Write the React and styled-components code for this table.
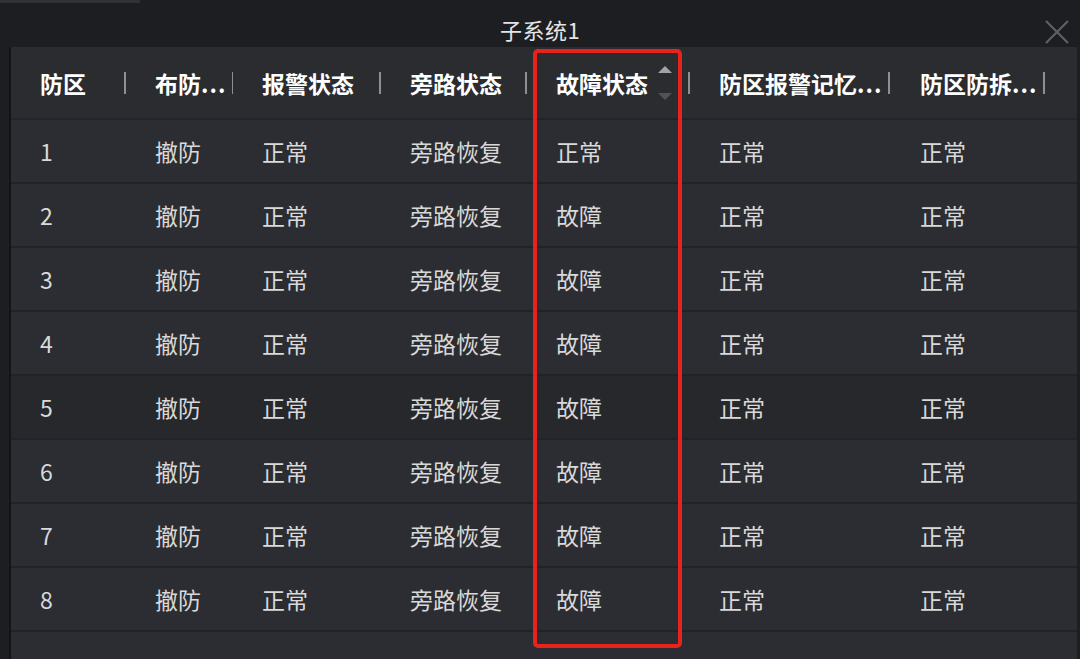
import React from 'react'
import styled, { createGlobalStyle } from 'styled-components'

const GlobalStyle = createGlobalStyle`
  html, body {
    margin: 0;
    padding: 0;
    background-color: #1d1e22;
  }
  body {
    font-family: "Noto Sans CJK SC", "Noto Sans", sans-serif;
  }
`

const COLS = '115px 107px 148px 146px 163px 201px 155px 1fr'

const Window = styled.div`
  position: relative;
  width: 1080px;
  height: 659px;
  display: flex;
  flex-direction: column;
  background-color: #1d1e22;
  overflow: hidden;
`

const TopTab = styled.div`
  width: 140px;
  height: 3px;
  background-color: #2f3136;
`

const TitleBar = styled.div`
  height: 44px;
  display: grid;
  grid-template-columns: 1fr auto 1fr;
  align-items: center;
`

const Title = styled.div`
  grid-column: 2;
  color: #e4e4e4;
  font-size: 22px;
  margin-top: 7px;
  letter-spacing: 0.5px;
`

const CloseButton = styled.div`
  justify-self: end;
  margin-right: 10px;
  margin-top: 14px;
  width: 26px;
  height: 26px;
  display: flex;
  align-items: center;
  justify-content: center;
`

const Table = styled.div`
  margin-left: 9px;
  width: 1066px;
  flex: 1;
  border-left: 2px solid #141518;
  background-color: #2b2d32;
  display: flex;
  flex-direction: column;
`

const HeaderRow = styled.div`
  display: grid;
  grid-template-columns: ${COLS};
  height: 71px;
  background-color: #2a2c30;
  border-bottom: 2px solid #232428;
`

const HeaderCell = styled.div`
  display: flex;
  align-items: center;
  padding-left: 29px;
  color: #ffffff;
  font-size: 23px;
  font-weight: 700;
  white-space: nowrap;
  overflow: hidden;
`

const Divider = styled.span`
  display: block;
  width: 2px;
  height: 22px;
  margin-left: ${p => (p.$tight ? '6px' : 'auto')};
  background-color: #8e8f92;
  flex-shrink: 0;
`

const Dots = styled.span`
  letter-spacing: 1px;
`

const SortIcon = styled.svg`
  margin-left: 9px;
  flex-shrink: 0;
`

const Row = styled.div`
  display: grid;
  grid-template-columns: ${COLS};
  height: 62px;
  background-color: ${p => (p.$dark ? '#26282c' : '#2b2d32')};
  border-bottom: 2px solid #222327;
`

const Cell = styled.div`
  display: flex;
  align-items: center;
  padding-left: 29px;
  color: #d9d9d9;
  font-size: 23px;
  white-space: nowrap;
`

const Highlight = styled.div`
  position: absolute;
  left: 533px;
  top: 49px;
  width: 141px;
  height: 591px;
  border: 4px solid #e8231d;
  border-radius: 5px;
  pointer-events: none;
`

const rows = Array.from({ length: 8 }, (_, i) => ({
  id: i + 1,
  arm: '撤防',
  alarm: '正常',
  bypass: '旁路恢复',
  fault: i === 0 ? '正常' : '故障',
  memory: '正常',
  tamper: '正常',
}))

const headers = [
  { label: '防区' },
  { label: '布防', more: true },
  { label: '报警状态' },
  { label: '旁路状态' },
  { label: '故障状态', sort: true },
  { label: '防区报警记忆', more: true },
  { label: '防区防拆', more: true },
]

export default function App() {
  return (
    <>
      <GlobalStyle />
      <Window>
        <TopTab />
        <TitleBar>
          <Title>子系统1</Title>
          <CloseButton>
            <svg width="26" height="26" viewBox="0 0 26 26">
              <path d="M2 2 L24 24 M24 2 L2 24" stroke="#5e6064" strokeWidth="2.2" />
            </svg>
          </CloseButton>
        </TitleBar>
        <Table>
          <HeaderRow>
            {headers.map(h => (
              <HeaderCell key={h.label}>
                {h.label}
                {h.more && <Dots>...</Dots>}
                {h.sort && (
                  <SortIcon width="16" height="40" viewBox="0 0 16 40">
                    <path d="M1 10 L8 3 L15 10 Z" fill="#a2a3a6" />
                    <path d="M1 30 L15 30 L8 37 Z" fill="#505256" />
                  </SortIcon>
                )}
                <Divider $tight={h.more} />
              </HeaderCell>
            ))}
            <HeaderCell />
          </HeaderRow>
          {rows.map(r => (
            <Row key={r.id} $dark={r.id === 5}>
              <Cell>{r.id}</Cell>
              <Cell>{r.arm}</Cell>
              <Cell>{r.alarm}</Cell>
              <Cell>{r.bypass}</Cell>
              <Cell>{r.fault}</Cell>
              <Cell>{r.memory}</Cell>
              <Cell>{r.tamper}</Cell>
              <Cell />
            </Row>
          ))}
        </Table>
        <Highlight />
      </Window>
    </>
  )
}
